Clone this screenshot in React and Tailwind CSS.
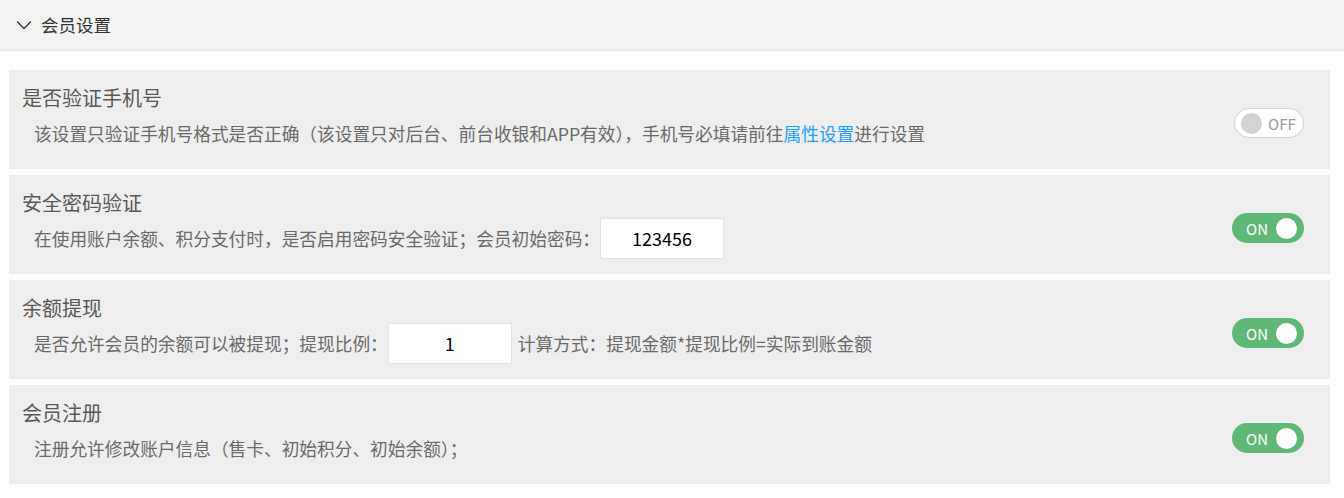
import React from "react";

function Toggle({ on }) {
  if (on) {
    return (
      <div className="flex h-[30px] w-[72px] items-center justify-between rounded-full bg-[#5fb878] pl-[14px] pr-[7px]">
        <span className="text-[15px] leading-none text-white">ON</span>
        <span className="h-[21px] w-[21px] rounded-full bg-white" />
      </div>
    );
  }
  return (
    <div className="flex h-[30px] w-[70px] items-center rounded-full border border-[#d2d2d2] bg-white pl-[6px] pr-[7px]">
      <span className="h-[21px] w-[21px] rounded-full bg-[#d2d2d2]" />
      <span className="ml-[6px] text-[15px] leading-none text-[#999]">OFF</span>
    </div>
  );
}

function Card({ title, children, on }) {
  return (
    <div className="flex h-[99px] items-start bg-[#eeeeee] pl-[13px] pr-[26px]">
      <div className="flex-1">
        <div className="mt-[16px] text-[20px] leading-[24px] text-[#595959]">{title}</div>
        <div className="mt-[2px] flex h-[42px] items-center pl-[12px] text-[17.7px] text-[#6a6a6a]">
          {children}
        </div>
      </div>
      <div className="mt-[38px]">
        <Toggle on={on} />
      </div>
    </div>
  );
}

function Input({ value }) {
  return (
    <div className="flex h-[41px] w-[124px] items-center justify-center rounded-[2px] border border-[#e2e2e2] bg-white text-[18px] text-black">
      {value}
    </div>
  );
}

export default function App() {
  return (
    <div
      className="min-h-[498px] bg-white"
      style={{ fontFamily: '"Noto Sans CJK SC", "Noto Sans", sans-serif' }}
    >
      <div className="flex h-[51px] items-center border-b border-[#e6e6e6] bg-[#f2f2f2] pl-[15px]">
        <svg width="18" height="18" viewBox="0 0 18 18" fill="none" stroke="#333" strokeWidth="1.3">
          <path d="M2 5.5 L9 12.5 L16 5.5" />
        </svg>
        <span className="ml-[8px] text-[17.5px] text-[#333]">会员设置</span>
      </div>
      <div className="flex flex-col gap-[6px] pl-[9px] pr-[14px] pt-[19px]">
        <Card title="是否验证手机号" on={false}>
          <span>
            该设置只验证手机号格式是否正确（该设置只对后台、前台收银和APP有效），手机号必填请前往
            <span className="text-[#1e9fff]">属性设置</span>进行设置
          </span>
        </Card>
        <Card title="安全密码验证" on>
          <span>在使用账户余额、积分支付时，是否启用密码安全验证；会员初始密码：</span>
          <Input value="123456" />
        </Card>
        <Card title="余额提现" on>
          <span>是否允许会员的余额可以被提现；提现比例：</span>
          <Input value="1" />
          <span className="ml-[6px]">计算方式：提现金额*提现比例=实际到账金额</span>
        </Card>
        <Card title="会员注册" on>
          <span>注册允许修改账户信息（售卡、初始积分、初始余额）；</span>
        </Card>
      </div>
    </div>
  );
}
